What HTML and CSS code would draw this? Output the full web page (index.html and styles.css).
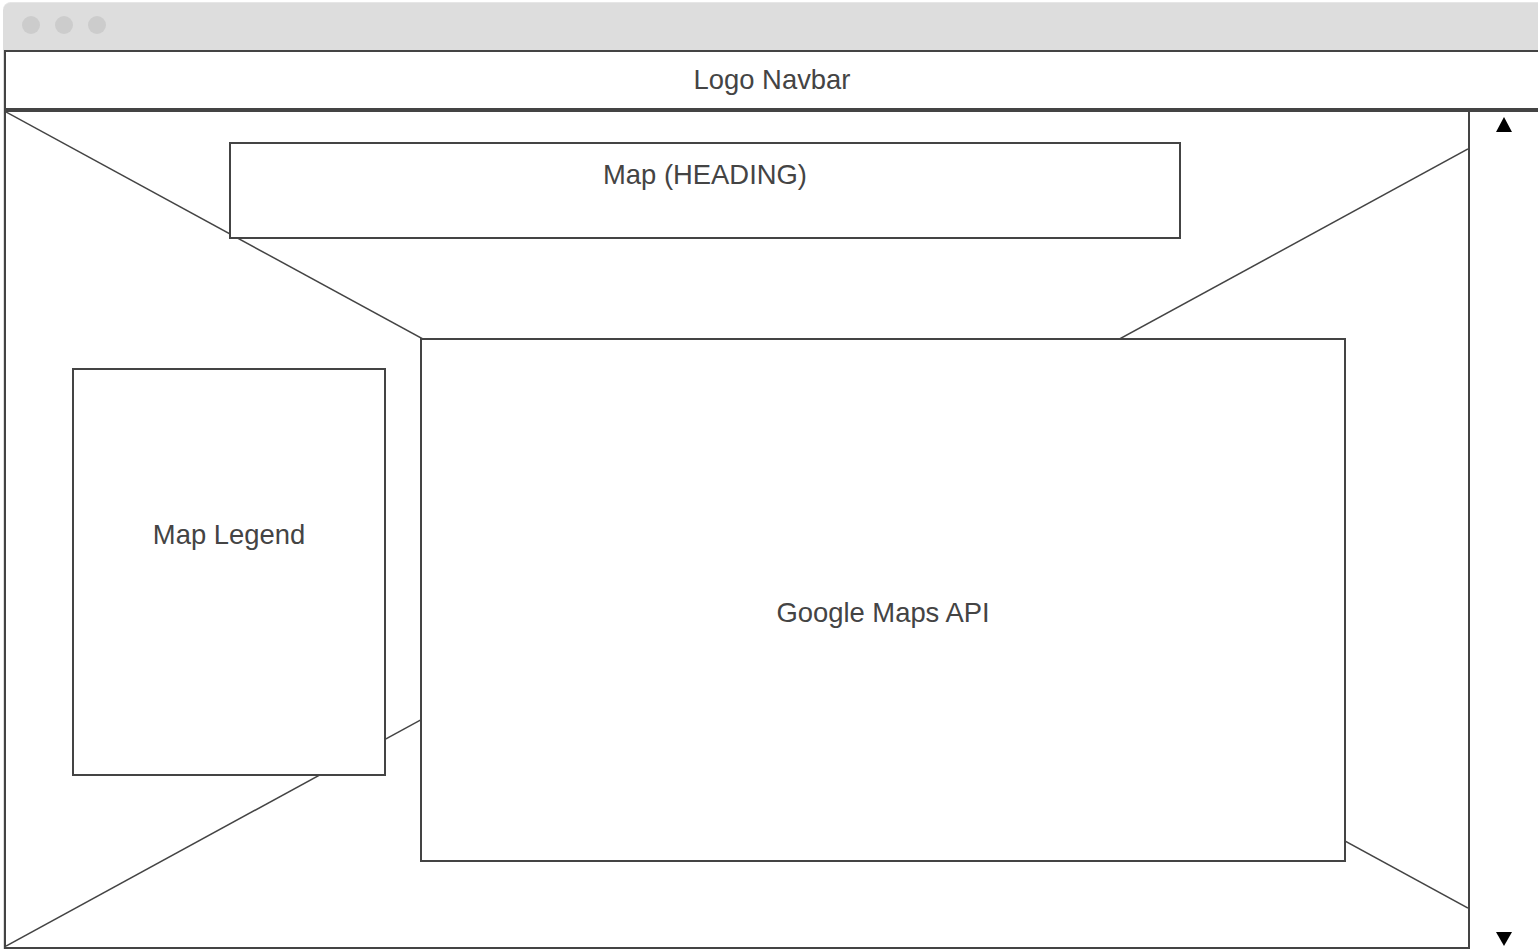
FILE: index.html
```html
<!DOCTYPE html>
<html lang="en">
<head>
    <meta charset="UTF-8">
    <meta name="viewport" content="width=device-width, initial-scale=1.0">
    <title>Map</title>
    <link rel="stylesheet" href="styles.css">
</head>
<body>
    <div class="ventana">
        <div class="barraTitulo">
            <span class="punto"></span>
            <span class="punto"></span>
            <span class="punto"></span>
        </div>
        <div class="navbar">Logo Navbar</div>
        <div class="cuerpo">
            <div class="vista">
                <svg class="cruz" width="1462" height="835" viewBox="0 0 1462 835">
                    <line x1="0" y1="0" x2="1462" y2="796" />
                    <line x1="0" y1="834" x2="1462" y2="37" />
                </svg>
                <div class="heading">Map (HEADING)</div>
                <div class="fila">
                    <div class="leyenda">Map Legend</div>
                    <div class="mapa">Google Maps API</div>
                </div>
            </div>
            <div class="scroll">
                <span class="flechaArriba"></span>
                <span class="flechaAbajo"></span>
            </div>
        </div>
    </div>
</body>
</html>
```

FILE: styles.css
```css
* {
    box-sizing: border-box;
    font-family: 'Liberation Sans', Arial, sans-serif;
}
body {
    margin: 0;
    background-color: white;
}
.ventana {
    margin: 2px 0 0 3px;
    padding-left: 1px;
    background-color: #dddddd;
    border-top: 1px solid #e6e6e6;
    border-radius: 8px 0 0 0;
}
.barraTitulo {
    height: 47px;
    display: flex;
    align-items: center;
    gap: 15px;
    padding: 0 0 3px 18px;
}
.punto {
    width: 18px;
    height: 18px;
    border-radius: 50%;
    background-color: #cccccc;
}
.navbar {
    height: 62px;
    border-top: 2px solid #444444;
    border-left: 2px solid #444444;
    border-bottom: 4px solid #444444;
    background-color: white;
    display: flex;
    align-items: center;
    justify-content: center;
    font-size: 27.4px;
    color: #444444;
}
.cuerpo {
    display: flex;
    background-color: white;
}
.vista {
    position: relative;
    width: 1466px;
    height: 837px;
    border-left: 2px solid #444444;
    border-right: 2px solid #444444;
    border-bottom: 2px solid #444444;
    padding-top: 30px;
}
.cruz {
    position: absolute;
    top: 0;
    left: 0;
}
.cruz line {
    stroke: #444444;
    stroke-width: 1.5;
}
.heading {
    position: relative;
    width: 952px;
    height: 97px;
    margin-left: 223px;
    padding-top: 16px;
    border: 2px solid #444444;
    background-color: white;
    text-align: center;
    line-height: 30px;
    font-size: 27.4px;
    color: #444444;
}
.fila {
    position: relative;
    display: flex;
    align-items: flex-start;
    gap: 34px;
    margin-top: 99px;
    padding-left: 66px;
}
.leyenda {
    width: 314px;
    height: 408px;
    margin-top: 30px;
    padding-top: 150px;
    border: 2px solid #444444;
    background-color: white;
    text-align: center;
    line-height: 30px;
    font-size: 27.4px;
    color: #444444;
}
.mapa {
    width: 926px;
    height: 524px;
    padding-top: 26px;
    border: 2px solid #444444;
    background-color: white;
    display: flex;
    align-items: center;
    justify-content: center;
    line-height: 30px;
    font-size: 27.4px;
    color: #444444;
}
.scroll {
    flex: 1;
    height: 837px;
    display: flex;
    flex-direction: column;
    align-items: center;
    justify-content: space-between;
    padding: 5px 0 3px 0;
}
.flechaArriba {
    width: 0;
    height: 0;
    border-left: 8px solid transparent;
    border-right: 8px solid transparent;
    border-bottom: 15px solid black;
}
.flechaAbajo {
    width: 0;
    height: 0;
    border-left: 8px solid transparent;
    border-right: 8px solid transparent;
    border-top: 14px solid black;
}
```
